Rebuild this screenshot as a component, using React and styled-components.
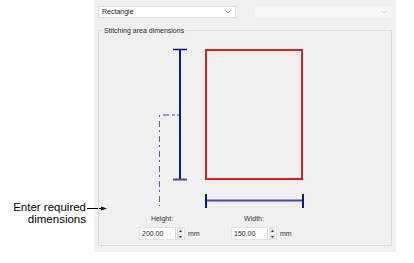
import React from "react";
import styled, { createGlobalStyle } from "styled-components";

const Global = createGlobalStyle`
  html, body { margin: 0; padding: 0; background: #ffffff; }
  body { width: 414px; height: 263px; overflow: hidden; font-family: "Liberation Sans", Arial, sans-serif; }
`;

const Page = styled.div`
  display: flex;
  align-items: flex-start;
  width: 414px;
  height: 263px;
`;

const Annotation = styled.div`
  position: relative;
  width: 94px;
  flex: none;
  box-sizing: border-box;
  padding: 201px 8px 0 0;
  text-align: right;
  font-size: 11.5px;
  line-height: 12px;
  color: #000;
`;

const Arrow = styled.svg`
  position: absolute;
  left: 87px;
  top: 204px;
  overflow: visible;
`;

const Panel = styled.div`
  width: 302px;
  height: 252px;
  flex: none;
  box-sizing: border-box;
  background: #f0f0f0;
  padding: 6px 4px 6px 4px;
  display: flex;
  flex-direction: column;
  gap: 12px;
  font-size: 7px;
  color: #2a2a2a;
`;

const DropRow = styled.div`
  display: flex;
  gap: 18px;
`;

const Dropdown = styled.div`
  width: 138px;
  height: 12px;
  box-sizing: border-box;
  display: flex;
  align-items: center;
  justify-content: space-between;
  padding: 0 4px 0 3px;
  background: ${(p) => (p.$disabled ? "#f7f7f7" : "#ffffff")};
  border: 1px solid ${(p) => (p.$disabled ? "#f2f2f2" : "#dedede")};
  line-height: 10px;
  color: #222;
`;

const Chevron = styled.svg`
  flex: none;
`;

const Group = styled.div`
  position: relative;
  flex: 1;
  box-sizing: border-box;
  border: 1px solid #dadada;
  display: flex;
  flex-direction: column;
`;

const Legend = styled.span`
  position: absolute;
  left: 4px;
  top: -5px;
  padding: 0 1px;
  background: #f0f0f0;
  line-height: 9px;
  color: #2a2a2a;
`;

const Diagram = styled.svg`
  display: block;
  flex: none;
`;

const Fields = styled.div`
  display: flex;
  padding-left: 40px;
`;

const Field = styled.div`
  width: 92px;
  display: grid;
  grid-template-columns: 46px auto;
  justify-content: start;
  column-gap: 3px;
  row-gap: 4px;
  align-items: center;
`;

const FieldLabel = styled.span`
  grid-column: 1;
  text-align: center;
  line-height: 9px;
  color: #333;
`;

const Spin = styled.div`
  grid-column: 1;
  display: flex;
  height: 13px;
  box-sizing: border-box;
  background: #fff;
  border: 1px solid #e2e2e2;
`;

const SpinValue = styled.span`
  flex: 1;
  padding-left: 2px;
  line-height: 11px;
  color: #222;
`;

const SpinButtons = styled.div`
  width: 9px;
  display: flex;
  flex-direction: column;
  gap: 1px;
  border-left: 1px solid #d6d6d6;
  background: #fff;
  padding: 0 1px;
  box-sizing: border-box;
`;

const SpinBtn = styled.div`
  flex: 1;
  background: #e6e6e6;
  display: flex;
  align-items: center;
  justify-content: center;
`;

const Unit = styled.span`
  grid-column: 2;
  line-height: 11px;
  color: #333;
`;

const Tri = ({ up }) => (
  <svg width="3" height="2" viewBox="0 0 3 2">
    <path d={up ? "M0 2 L1.5 0 L3 2 Z" : "M0 0 L1.5 2 L3 0 Z"} fill="#333" />
  </svg>
);

const SpinBox = ({ value }) => (
  <Spin>
    <SpinValue>{value}</SpinValue>
    <SpinButtons>
      <SpinBtn><Tri up /></SpinBtn>
      <SpinBtn><Tri /></SpinBtn>
    </SpinButtons>
  </Spin>
);

const ChevronIcon = ({ color }) => (
  <Chevron width="6" height="4" viewBox="0 0 6 4">
    <path d="M0.5 0.5 L3 3 L5.5 0.5" fill="none" stroke={color} strokeWidth="0.8" />
  </Chevron>
);

export default function App() {
  return (
    <>
      <Global />
      <Page>
        <Annotation>
          Enter required
          <br />
          dimensions
          <Arrow width="22" height="8" viewBox="0 0 22 8">
            <line x1="0" y1="4.5" x2="17" y2="4.5" stroke="#000" strokeWidth="1" />
            <path d="M14 2.5 L20 4.5 L14 6.5 Z" fill="#000" />
          </Arrow>
        </Annotation>
        <Panel>
          <DropRow>
            <Dropdown>
              <span>Rectangle</span>
              <ChevronIcon color="#777" />
            </Dropdown>
            <Dropdown $disabled>
              <span />
              <ChevronIcon color="#c4c4c4" />
            </Dropdown>
          </DropRow>
          <Group>
            <Legend>Stitching area dimensions</Legend>
            <Diagram width="292" height="183" viewBox="0 0 292 183">
              {/* red rectangle */}
              <rect x="107" y="19" width="96" height="129" fill="none" stroke="#d62222" strokeWidth="2" />
              {/* vertical dimension */}
              <line x1="81" y1="18" x2="81" y2="149" stroke="#14148a" strokeWidth="2" />
              <line x1="74" y1="18.5" x2="88" y2="18.5" stroke="#14148a" strokeWidth="1.5" />
              <line x1="74" y1="148.5" x2="88" y2="148.5" stroke="#4a4aa0" strokeWidth="2" />
              {/* horizontal dimension */}
              <line x1="106" y1="169.5" x2="204" y2="169.5" stroke="#4a4aa0" strokeWidth="2" />
              <line x1="107" y1="163" x2="107" y2="177" stroke="#14148a" strokeWidth="2" />
              <line x1="204" y1="163" x2="204" y2="177" stroke="#14148a" strokeWidth="2" />
              {/* dash-dot leader */}
              <line x1="60.5" y1="84" x2="60.5" y2="175" stroke="#5a5aa8" strokeWidth="1" strokeDasharray="2 4 6 3" />
              <line x1="64" y1="84" x2="80" y2="84" stroke="#9c9cd0" strokeWidth="2" strokeDasharray="6 3 3 2" />
            </Diagram>
            <Fields>
              <Field>
                <FieldLabel>Height:</FieldLabel>
                <SpinBox value="200.00" />
                <Unit>mm</Unit>
              </Field>
              <Field>
                <FieldLabel>Width:</FieldLabel>
                <SpinBox value="150.00" />
                <Unit>mm</Unit>
              </Field>
            </Fields>
          </Group>
        </Panel>
      </Page>
    </>
  );
}
